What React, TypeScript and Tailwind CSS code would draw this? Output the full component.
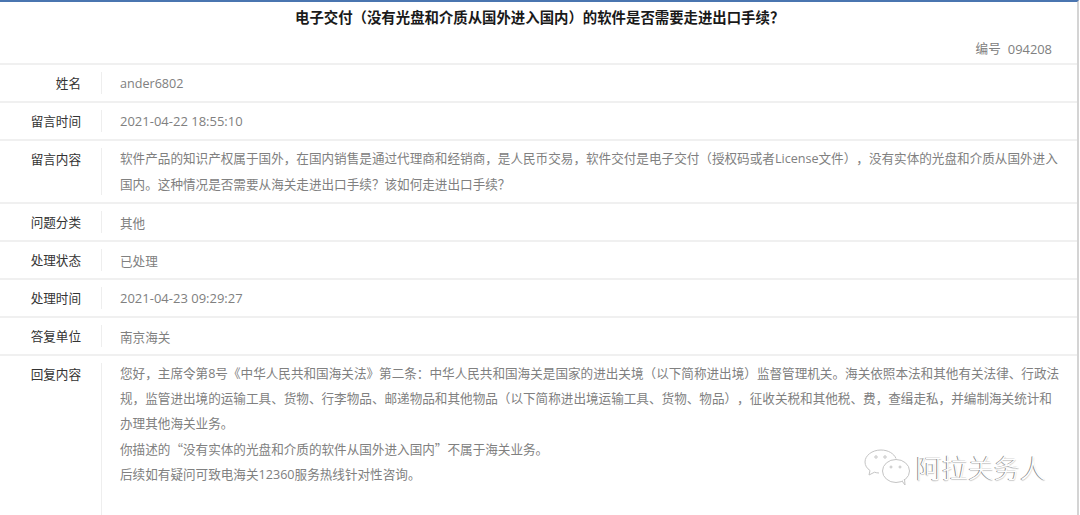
import React from "react";

const Q = ({ children }: { children: string }) => (
  <span className="font-['Noto_Sans_CJK_SC',sans-serif]">{children}</span>
);

function Row({ label, children, rowClass, valueClass }: { label: string; children: React.ReactNode; rowClass: string; valueClass: string }) {
  return (
    <div className={"flex border-b-2 border-[#f0f0f0] pt-[7px] pb-[7px] " + rowClass}>
      <div className="w-[102px] shrink-0 border-r border-[#eeeeee] pr-[20px] pt-[1px] text-right text-[12.6px] leading-[21px] text-[#333333]">
        {label}
      </div>
      <div className={"flex-1 pl-[18px] pr-[16px] text-[12.6px] text-[#808080] " + valueClass}>{children}</div>
    </div>
  );
}

export default function App() {
  return (
    <div className="relative h-[515px] w-[1080px] overflow-hidden bg-white">
      <div className="h-full w-[1079px] border-t-2 border-r-2 border-t-[#4a75b0] border-r-[#d4d4d4] font-['Open_Sans','Noto_Sans_CJK_SC',sans-serif] [text-spacing-trim:space-all]">
        <h1 className="pt-[6px] pl-[295px] text-[14.4px] leading-[20px] font-bold text-[#1a1a1a]">
          电子交付（没有光盘和介质从国外进入国内）的软件是否需要走进出口手续？
        </h1>
        <div className="flex h-[37px] items-start justify-end gap-[7px] border-b-2 border-[#f0f0f0] pt-[11px] pr-[25px] text-[12.6px] leading-[20px] text-[#808080]">
          <span>编号</span>
          <span className="text-[12.9px]">094208</span>
        </div>
        <Row label="姓名" rowClass="h-[38px]" valueClass="-mt-px leading-[25px]">ander6802</Row>
        <Row label="留言时间" rowClass="h-[38px]" valueClass="-mt-px leading-[25px]"><span className="text-[13px]">2021-04-22 18:55:10</span></Row>
        <Row label="留言内容" rowClass="h-[63px]" valueClass="-mt-[2px] leading-[26px]">
          软件产品的知识产权属于国外，在国内销售是通过代理商和经销商，是人民币交易，软件交付是电子交付（授权码或者License文件），没有实体的光盘和介质从国外进入国内。这种情况是否需要从海关走进出口手续？该如何走进出口手续？
        </Row>
        <Row label="问题分类" rowClass="h-[38px]" valueClass="leading-[25px]">其他</Row>
        <Row label="处理状态" rowClass="h-[38px]" valueClass="leading-[25px]">已处理</Row>
        <Row label="处理时间" rowClass="h-[38px]" valueClass="-mt-px leading-[25px]"><span className="text-[13px]">2021-04-23 09:29:27</span></Row>
        <Row label="答复单位" rowClass="h-[38px]" valueClass="leading-[25px]">南京海关</Row>
        <div className="flex h-[160px] pt-[7px]">
          <div className="w-[102px] shrink-0 border-r border-[#eeeeee] pr-[20px] pt-[1px] text-right text-[12.6px] leading-[21px] text-[#333333]">
            回复内容
          </div>
          <div className="-mt-[2px] flex-1 pl-[18px] pr-[16px] text-[12.6px] leading-[25px] text-[#808080]">
            <p>
              您好，主席令第8号《中华人民共和国海关法》第二条：中华人民共和国海关是国家的进出关境（以下简称进出境）监督管理机关。海关依照本法和其他有关法律、行政法规，监管进出境的运输工具、货物、行李物品、邮递物品和其他物品（以下简称进出境运输工具、货物、物品），征收关税和其他税、费，查缉走私，并编制海关统计和办理其他海关业务。
            </p>
            <p>你描述的<Q>“</Q>没有实体的光盘和介质的软件从国外进入国内<Q>”</Q>不属于海关业务。</p>
            <p>后续如有疑问可致电海关12360服务热线针对性咨询。</p>
          </div>
        </div>
      </div>
      <div className="absolute left-[864px] top-[448px] flex items-center gap-[6px]">
        <svg width="46" height="38" viewBox="0 0 46 38" fill="none" stroke="#c4c4c4" strokeWidth="1">
          <path d="M17 2C8 2 1 7.500 1 14c0 3.500 2 6.500 5 8.500L5 27l5.500-2.800c1.500.5 3 .8 4.500.8" fill="#ffffff" />
          <path d="M17 2c7 0 13 3.500 15 8.500" />
          <ellipse cx="32" cy="23" rx="13.500" ry="11.500" fill="#ffffff" />
          <path d="M38 33l3 4-.5-6" fill="#ffffff" />
          <circle cx="12" cy="9" r="1.200" />
          <circle cx="21" cy="9" r="1.200" />
          <circle cx="27" cy="19" r="1" />
          <circle cx="36" cy="19" r="1" />
        </svg>
        <span className="text-[26px] leading-[34px] font-['Noto_Sans_CJK_SC',sans-serif] font-light text-white [text-shadow:-1px_0_0_#8a8a8a,0_1px_1px_#c8c8c8]">
          阿拉关务人
        </span>
      </div>
    </div>
  );
}
